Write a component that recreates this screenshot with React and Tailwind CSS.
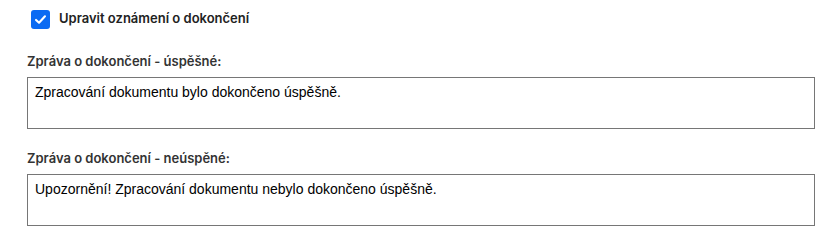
import React, { useState } from 'react';

const Field = ({ label, value, onChange }) => (
  <div className="flex flex-col">
    <label className="text-[13px] font-semibold text-[#333] leading-[16px] mb-[8px]">{label}</label>
    <textarea
      value={value}
      onChange={(e) => onChange(e.target.value)}
      className="w-full h-[52px] border border-[#767676] px-[7px] py-[5px] text-[14px] leading-[18px] text-black resize-none outline-none"
      style={{ fontFamily: '"Liberation Sans", Arial, sans-serif' }}
    />
  </div>
);

const App = () => {
  const [checked, setChecked] = useState(true);
  const [ok, setOk] = useState('Zpracování dokumentu bylo dokončeno úspěšně.');
  const [fail, setFail] = useState('Upozornění! Zpracování dokumentu nebylo dokončeno úspěšně.');

  return (
    <div className="bg-white w-[840px] h-[239px] px-[27px] pt-[9px] font-[Inter,sans-serif]">
      <div className="flex items-center pl-[4px] h-[20px]">
        <button
          onClick={() => setChecked(!checked)}
          className={`w-[19px] h-[19px] rounded-[3px] flex items-center justify-center ${checked ? 'bg-[#0b6bf3]' : 'border border-[#767676] bg-white'}`}
        >
          {checked && (
            <svg width="13" height="13" viewBox="0 0 16 16" fill="none">
              <path d="M2.5 8.5 L6.2 12 L13.5 4" stroke="white" strokeWidth="2.6" strokeLinecap="round" strokeLinejoin="round" />
            </svg>
          )}
        </button>
        <span className="ml-[9px] text-[13px] font-semibold text-[#222]">Upravit oznámení o dokončení</span>
      </div>

      <div className="mt-[24px] flex flex-col gap-[21px] w-[788px]">
        <Field label="Zpráva o dokončení - úspěšné:" value={ok} onChange={setOk} />
        <Field label="Zpráva o dokončení - neúspěné:" value={fail} onChange={setFail} />
      </div>
    </div>
  );
};

export default App;
